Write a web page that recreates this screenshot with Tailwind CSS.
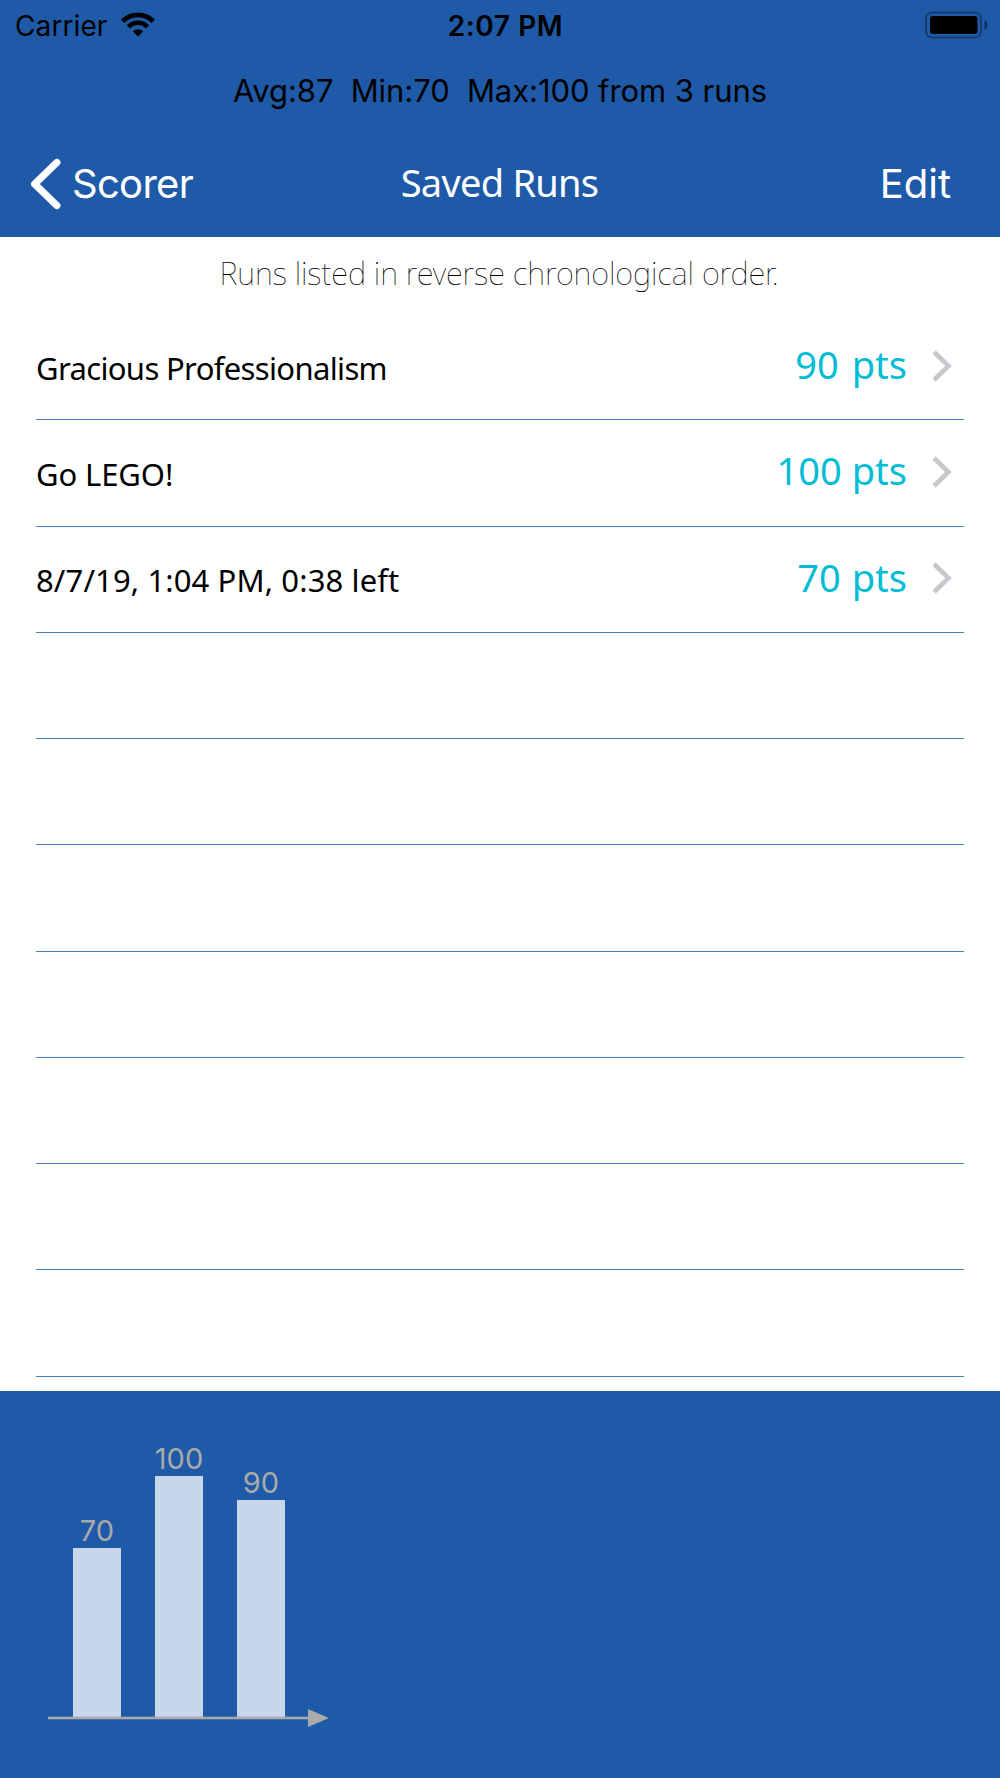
<!DOCTYPE html>
<html lang="en">
<head>
    <meta charset="UTF-8">
    <meta name="viewport" content="width=device-width, initial-scale=1.0">
    <title>Saved Runs</title>
    <script src="https://cdn.jsdelivr.net/npm/@tailwindcss/browser@4"></script>
</head>
<body class="bg-white">
    <div class="flex flex-col w-[1000px] h-[1778px] overflow-hidden font-['Inter',sans-serif] text-black">

        <header class="h-[237px] shrink-0 bg-[#1f5aa8]">
            <!-- Status bar -->
            <div class="grid grid-cols-3 items-center h-[50px] pl-[15px] pr-3">
                <div class="flex items-center gap-3.5">
                    <span class="text-[28px] tracking-[0.1px] pt-px">Carrier</span>
                    <svg class="w-[34px] h-[25px] -mt-px" viewBox="0 0 34 25">
                        <path d="M17 24.5 L11.8 19.3 A7.4 7.4 0 0 1 22.2 19.3 Z" />
                        <path d="M7.4 14.8 A13.4 13.4 0 0 1 26.6 14.8" fill="none" stroke="currentColor" stroke-width="4.6" />
                        <path d="M1.7 9.2 A21.6 21.6 0 0 1 32.3 9.2" fill="none" stroke="currentColor" stroke-width="4.9" />
                    </svg>
                </div>
                <span class="text-center text-[28px] font-semibold tracking-[0.6px] pl-2 pt-px">2:07 PM</span>
                <svg class="w-[64px] h-[28px] justify-self-end -mt-px" viewBox="0 0 64 28">
                    <rect x="2" y="1.6" width="55" height="25" rx="6" fill="none" stroke="#173c70" stroke-width="2" />
                    <rect x="6" y="5" width="47.5" height="18" rx="3" />
                    <path d="M60.5 9 Q63.5 10.5 63.5 14 Q63.5 17.5 60.5 19 Z" fill="#12305c" />
                </svg>
            </div>

            <p class="h-[82px] pt-5 text-center text-[31px] leading-[42px] tracking-[-0.07px] whitespace-pre">Avg:87  Min:70  Max:100 from 3 runs</p>

            <!-- Navigation -->
            <nav class="grid grid-cols-3 items-center h-[104px] pl-[30px] pr-[49px] text-white">
                <a href="#" class="flex items-center gap-[11px] text-[40px] tracking-[-0.7px]">
                    <svg class="w-[31px] h-[52px]" viewBox="0 0 31 52" fill="none" stroke="currentColor" stroke-width="7.3" stroke-linecap="round" stroke-linejoin="round">
                        <path d="M26.8 4.5 L4.7 26 L26.8 47.5" />
                    </svg>
                    Scorer
                </a>
                <h1 class="pb-[3px] pl-[18px] text-center text-[38px] tracking-[-0.75px] font-['Noto_Sans',sans-serif]">Saved Runs</h1>
                <a href="#" class="text-right text-[40px]">Edit</a>
            </nav>
        </header>

        <main class="h-[1154px] shrink-0 overflow-hidden px-9 font-['Noto_Sans',sans-serif]">
            <p class="h-[77px] pt-[11px] pr-0.5 text-center text-[31px] leading-[50px] font-thin tracking-[-0.1px]">Runs listed in reverse chronological order.</p>
            <ul>
                <li class="flex items-center h-[106.25px] pr-3 border-b border-[#4b7dc0]">
                    <span class="flex-1 pt-[3px] text-[31px] tracking-[-0.65px]">Gracious Professionalism</span>
                    <span class="pb-1 text-[38px] [word-spacing:3px] text-[#00bcd4]">90 pts</span>
                    <svg class="ml-[25px] w-[20px] h-[32px] -mt-0.5" viewBox="0 0 20 32" fill="none" stroke="#c7c7cc" stroke-width="4.6"><path d="M2 2 L16.5 16 L2 30" /></svg>
                </li>
                <li class="flex items-center h-[106.25px] pr-3 border-b border-[#4b7dc0]">
                    <span class="flex-1 pt-[3px] text-[31px] tracking-[-0.1px]">Go LEGO!</span>
                    <span class="pb-1 text-[38px] text-[#00bcd4]">100 pts</span>
                    <svg class="ml-[25px] w-[20px] h-[32px] -mt-0.5" viewBox="0 0 20 32" fill="none" stroke="#c7c7cc" stroke-width="4.6"><path d="M2 2 L16.5 16 L2 30" /></svg>
                </li>
                <li class="flex items-center h-[106.25px] pr-3 border-b border-[#4b7dc0]">
                    <span class="flex-1 pt-[3px] text-[31px] tracking-[0.13px]">8/7/19, 1:04 PM, 0:38 left</span>
                    <span class="pb-1 text-[38px] [word-spacing:1px] text-[#00bcd4]">70 pts</span>
                    <svg class="ml-[25px] w-[20px] h-[32px] -mt-0.5" viewBox="0 0 20 32" fill="none" stroke="#c7c7cc" stroke-width="4.6"><path d="M2 2 L16.5 16 L2 30" /></svg>
                </li>
                <!-- Empty rows -->
                <li class="h-[106.25px] border-b border-[#4b7dc0]"></li>
                <li class="h-[106.25px] border-b border-[#4b7dc0]"></li>
                <li class="h-[106.25px] border-b border-[#4b7dc0]"></li>
                <li class="h-[106.25px] border-b border-[#4b7dc0]"></li>
                <li class="h-[106.25px] border-b border-[#4b7dc0]"></li>
                <li class="h-[106.25px] border-b border-[#4b7dc0]"></li>
                <li class="h-[106.25px] border-b border-[#4b7dc0]"></li>
            </ul>
        </main>

        <!-- Score chart -->
        <footer class="flex-1 bg-[#1f5aa8] pl-12 text-[#aaaaaa] text-[29px] leading-[34px]">
            <div class="flex items-end gap-[34px] h-[326px] pl-[25px]">
                <div class="flex flex-col items-center w-12">
                    <span>70</span>
                    <div class="w-full bg-[#c7d6e9]" style="height: 169px"></div>
                </div>
                <div class="flex flex-col items-center w-12">
                    <span>100</span>
                    <div class="w-full bg-[#c7d6e9]" style="height: 241px"></div>
                </div>
                <div class="flex flex-col items-center w-12">
                    <span>90</span>
                    <div class="w-full bg-[#c7d6e9]" style="height: 217px"></div>
                </div>
            </div>
            <svg class="-mt-[8px] w-[282px] h-[18px]" viewBox="0 0 282 18" fill="currentColor">
                <rect x="0" y="7.7" width="262" height="2.6" />
                <path d="M260 0 L281 9 L260 18 Z" />
            </svg>
        </footer>
    </div>
</body>
</html>
